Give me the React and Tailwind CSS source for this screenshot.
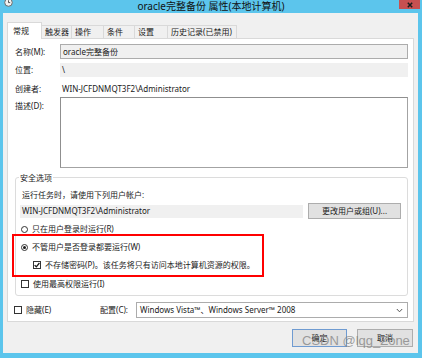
import React from 'react';

const Check = ({ checked }) => (
  <span className="flex h-[8px] w-[8px] shrink-0 items-center justify-center border border-[#333333] bg-white">
    {checked && (
      <svg width="6" height="6" viewBox="0 0 6 6">
        <path d="M0.6 3.1 L2.3 4.8 L5.4 1" fill="none" stroke="#1a1a1a" strokeWidth="1.3" />
      </svg>
    )}
  </span>
);

const Radio = ({ on }) => (
  <span className="flex h-[7px] w-[7px] shrink-0 items-center justify-center rounded-full border border-[#333333] bg-white">
    {on && <span className="h-[3px] w-[3px] rounded-full bg-[#1a1a1a]" />}
  </span>
);

const tabs = [
  { label: '常规', w: 'w-[35px]', active: true },
  { label: '触发器', w: 'w-[31px]' },
  { label: '操作', w: 'w-[33px]' },
  { label: '条件', w: 'w-[32px]' },
  { label: '设置', w: 'w-[34px]' },
  { label: '历史记录(已禁用)', w: 'w-[70px]' },
];

export default function App() {
  return (
    <div className="relative flex h-[358px] w-[422px] flex-col overflow-hidden bg-[#5cc5ec] font-['Noto_Sans','Noto_Sans_CJK_SC',sans-serif] text-[8px] leading-[12px] text-[#1a1a1a]">
      {/* Title bar */}
      <div className="flex h-[13px] shrink-0 items-start">
        <div className="w-[26px] pl-[4px]">
          <svg width="9" height="9" viewBox="0 0 9 9" className="-mt-[2px]">
            <circle cx="4.5" cy="4.5" r="3.8" fill="#f2f2f2" stroke="#6b6b6b" strokeWidth="1" />
            <path d="M4.5 2.3 V4.6 H6.2" fill="none" stroke="#444" strokeWidth="0.9" />
          </svg>
        </div>
        <div className="flex-1 text-center text-[10px] leading-[13px] text-[#111111]">
          oracle完整备份 属性(本地计算机)
        </div>
        <div className="flex w-[26px] justify-end pr-[2px]">
          <div className="flex h-[9px] w-[21px] items-center justify-center bg-[#c75050]">
            <svg width="6" height="6" viewBox="0 0 6 6">
              <path d="M0.8 0.8 L5.2 5.2 M5.2 0.8 L0.8 5.2" stroke="#1c1c1c" strokeWidth="1.5" />
            </svg>
          </div>
        </div>
      </div>

      {/* Client area */}
      <div className="mb-[5px] ml-[3px] mr-[4px] flex flex-1 flex-col bg-[#f0f0f0] px-[4px] pt-[9px]">
        {/* Tabs */}
        <div className="flex h-[16px] shrink-0 items-end">
          {tabs.map((t) =>
            t.active ? (
              <div
                key={t.label}
                className={`relative z-10 -mb-px h-[17px] ${t.w} border border-b-0 border-[#d9d9d9] bg-white pl-[5px] pt-[2px]`}
              >
                {t.label}
              </div>
            ) : (
              <div
                key={t.label}
                className={`-ml-px h-[13px] ${t.w} border border-b-0 border-[#d9d9d9] bg-[#f0f0f0] pl-[3px]`}
              >
                {t.label}
              </div>
            )
          )}
        </div>

        {/* Panel */}
        <div className="flex h-[284px] shrink-0 flex-col border border-[#d9d9d9] bg-white pb-[3px] pl-[7px] pr-[5px]">
          <div className="mt-[5px] flex h-[15px] items-center">
            <span className="w-[45px]">名称(M):</span>
            <div className="flex h-full flex-1 items-center border border-[#acacac] bg-[#f0f0f0] pl-[2px]">
              oracle完整备份
            </div>
          </div>
          <div className="mt-[4px] flex h-[14px] items-center">
            <span className="w-[45px]">位置:</span>
            <div className="flex h-full flex-1 items-center bg-[#f0f0f0] pl-[2px]">\</div>
          </div>
          <div className="mt-[5px] flex h-[14px] items-center">
            <span className="w-[45px]">创建者:</span>
            <div className="flex h-full flex-1 items-center pl-[2px]">WIN-JCFDNMQT3F2\Administrator</div>
          </div>
          <div className="mt-[1px] flex items-start">
            <span className="mt-[3px] w-[45px]">描述(D):</span>
            <div className="h-[71px] flex-1 border border-[#a3a3a3] border-l-[#8f8f8f] border-t-[#8f8f8f] bg-white" />
          </div>

          {/* Security options group */}
          <div className="mt-[9px] flex h-[119px] shrink-0 flex-col rounded-[3px] border border-[#dcdcdc] pl-[4px] pr-[6px]">
            <span className="-ml-px -mt-[6px] w-fit bg-white px-px">安全选项</span>
            <span className="ml-[2px] mt-[5px]">运行任务时，请使用下列用户帐户:</span>
            <div className="mt-[2px] flex h-[16px] items-center">
              <div className="flex h-[13px] w-[283px] items-center bg-[#f0f0f0] pl-[2px]">
                WIN-JCFDNMQT3F2\Administrator
              </div>
              <div className="ml-[5px] flex h-[16px] w-[93px] items-center justify-center border border-[#adadad] bg-[#e1e1e1]">
                更改用户或组(U)...
              </div>
            </div>
            <div className="ml-px mt-[4px] flex h-[12px] items-center gap-[4px]">
              <Radio />
              <span>只在用户登录时运行(R)</span>
            </div>
            <div className="ml-px mt-[6px] flex h-[12px] items-center gap-[4px]">
              <Radio on />
              <span>不管用户是否登录都要运行(W)</span>
            </div>
            <div className="ml-[13px] mt-[6px] flex h-[12px] items-center gap-[4px]">
              <Check checked />
              <span>不存储密码(P)。该任务将只有访问本地计算机资源的权限。</span>
            </div>
            <div className="ml-px mt-[7px] flex h-[12px] items-center gap-[4px]">
              <Check />
              <span>使用最高权限运行(I)</span>
            </div>
          </div>

          <div className="mt-[6px] flex h-[16px] items-center">
            <div className="-ml-px flex w-[86px] items-center gap-[4px]">
              <Check />
              <span>隐藏(E)</span>
            </div>
            <span className="w-[36px]">配置(C):</span>
            <div className="flex h-full flex-1 items-center justify-between border border-[#acacac] bg-white pl-[3px] pr-[4px]">
              <span>Windows Vista™、Windows Server™ 2008</span>
              <svg width="7" height="5" viewBox="0 0 7 5">
                <path d="M0.8 1 L3.5 3.8 L6.2 1" fill="none" stroke="#555" strokeWidth="1" />
              </svg>
            </div>
          </div>
        </div>

        {/* Dialog buttons */}
        <div className="mt-[7px] flex shrink-0 justify-end gap-[10px] pr-px">
          <div className="flex h-[18px] w-[55px] items-center justify-center border border-[#6f9bd1] bg-[#e1e1e1]">确定</div>
          <div className="flex h-[18px] w-[56px] items-center justify-center border border-[#adadad] bg-[#e1e1e1]">取消</div>
        </div>
      </div>

      {/* Red annotation box */}
      <div className="absolute left-[12px] top-[234px] h-[43px] w-[252px] border-2 border-[#ff0000]" />

      {/* Watermark */}
      <div className="absolute left-[302px] top-[334px] font-['Liberation_Sans',sans-serif] text-[13px] leading-[14px] text-[#808080]/75">
        CSDN @lqg_Zone
      </div>
    </div>
  );
}
